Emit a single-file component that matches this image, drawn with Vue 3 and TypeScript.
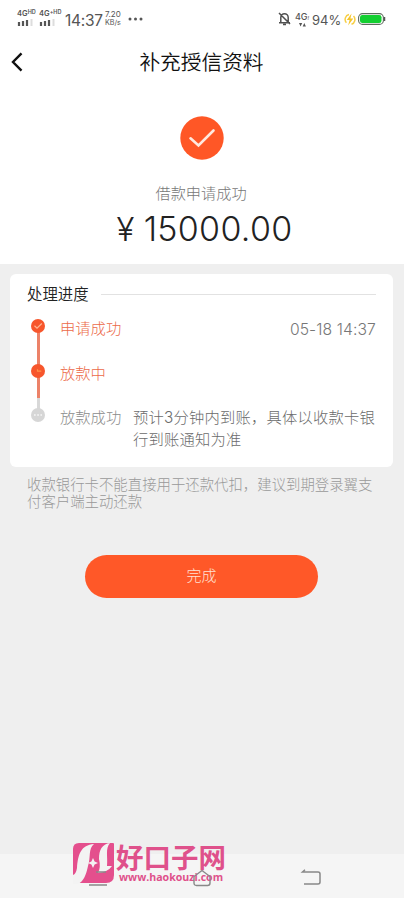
<script setup lang="ts">
interface Step {
  label: string
  state: 'done' | 'active' | 'pending'
  time?: string
  note?: string[]
}

const steps: Step[] = [
  { label: '申请成功', state: 'done', time: '05-18 14:37' },
  { label: '放款中', state: 'active' },
  { label: '放款成功', state: 'pending', note: ['预计3分钟内到账，具体以收款卡银', '行到账通知为准'] },
]
const tips: string[] = ['收款银行卡不能直接用于还款代扣，建议到期登录翼支', '付客户端主动还款']
const networks: string[] = ['HD', '+HD']
</script>

<template>
  <div class="screen">
    <header class="status">
      <div v-for="n in networks" :key="n" class="signal">
        <span class="net">4G<sup>{{ n }}</sup></span>
        <svg width="17" height="7" viewBox="0 0 17 7">
          <path d="M2 3v4M6 2v5M10 1v6" stroke="#555" stroke-width="2.2" />
          <path d="M14.500 0v7" stroke="#ddd" stroke-width="2" />
        </svg>
      </div>
      <span class="clock">14:37</span>
      <span class="speed"><span>7.20</span><span>KB/s</span></span>
      <svg class="more" width="15" height="4" viewBox="0 0 15 4" fill="#555">
        <circle cx="2" cy="2" r="1.500" /><circle cx="7.500" cy="2" r="1.500" /><circle cx="13" cy="2" r="1.500" />
      </svg>
      <svg class="bell" width="13" height="14" viewBox="0 0 13 14" fill="none" stroke="#505050" stroke-width="1.500">
        <path d="M2.800 10.300V5.500a3.700 3.700 0 0 1 7.400 0v4.800M1 10.700h11M5 12.600h3M1 1l11 11" />
      </svg>
      <span class="data">
        <span>4G<i>!</i></span>
        <svg width="7" height="4" viewBox="0 0 7 4" fill="#555"><path d="M0 0h3.200L1.600 3.500zM3.700 3.500h3.200L5.300 0z" /></svg>
      </span>
      <span class="percent">94%</span>
      <svg class="charge" width="12" height="13" viewBox="0 0 12 13" fill="none">
        <path d="M5 1.500a5 5 0 0 0-2.600 8.200M7.500 11.300a5 5 0 0 0 2-8.200" stroke="#f7cf45" stroke-width="1.500" />
        <path d="M7.600.5 2.800 7h2.800l-1.500 5.500L9.300 5.500H6.400z" fill="#f5c52b" />
      </svg>
      <svg class="battery" width="28" height="12" viewBox="0 0 28 12">
        <rect x=".6" y=".6" width="24.800" height="10.800" rx="4" fill="#fff" stroke="#5d6b5d" stroke-width="1.100" />
        <rect x="2" y="2" width="21.500" height="8" rx="2.300" fill="#13cf31" />
        <path d="M26.500 4v4" stroke="#555" stroke-width="1.500" />
      </svg>
    </header>

    <nav class="bar">
      <svg class="back" width="12" height="20" viewBox="0 0 12 20" fill="none" stroke="#111" stroke-width="2.400">
        <path d="M10.500 1.300 2 10l8.500 8.700" />
      </svg>
      <h1>补充授信资料</h1>
    </nav>

    <section class="result">
      <svg width="44" height="44" viewBox="0 0 44 44">
        <circle cx="22" cy="22" r="21.700" fill="#ff5726" />
        <path d="m10.500 22.300 8 7.200L33.500 14.500" fill="none" stroke="#ffe9df" stroke-width="2.600" stroke-linecap="round" />
      </svg>
      <p class="caption">借款申请成功</p>
      <p class="amount"><span class="yen">¥</span><span class="digits">15000.00</span></p>
    </section>

    <main>
      <section class="card">
        <div class="heading"><h2>处理进度</h2><hr /></div>
        <ol>
          <li v-for="s in steps" :key="s.label" :class="s.state">
            <svg class="dot" width="14" height="14" viewBox="0 0 14 14" fill="none">
              <circle cx="7" cy="7" r="7" :fill="s.state === 'pending' ? '#d6d6d6' : '#f7562c'" />
              <path v-if="s.state === 'done'" d="m3.500 6.800 2.500 2.400 4.800-4.700" stroke="#ffb592" stroke-width="1.200" />
              <path v-else-if="s.state === 'active'" d="M6.500 5.200v2h3.800" stroke="#ff9348" stroke-width="1.200" />
              <path v-else d="M3 7h1.700M6.200 7h1.700M9.400 7H11" stroke="#f6f6f6" stroke-width="1.500" />
            </svg>
            <span class="label">{{ s.label }}</span>
            <time v-if="s.time">{{ s.time }}</time>
            <p v-if="s.note" class="note"><span v-for="line in s.note" :key="line">{{ line }}</span></p>
          </li>
        </ol>
      </section>
      <p class="tips"><span v-for="t in tips" :key="t">{{ t }}</span></p>
      <button type="button">完成</button>
    </main>

    <footer>
      <svg class="menu-key" width="20" height="18" viewBox="0 0 20 18" fill="none" stroke="#888" stroke-width="1.300">
        <path d="M8 3h10M1 16h18" />
      </svg>
      <svg class="home-key" width="18" height="18" viewBox="0 0 18 18" fill="none" stroke="#888" stroke-width="1.400">
        <path d="M1 7.500 9 1.500l8 6V14q0 2.500-2.500 2.500h-11Q1 16.500 1 14z" />
      </svg>
      <svg class="back-key" width="21" height="17" viewBox="0 0 21 17" fill="none" stroke="#888" stroke-width="1.500">
        <path d="M5 .8 2.500 3H18q2 0 2 2v8q0 2-2 2H4" />
      </svg>
      <div class="watermark">
        <svg width="42" height="42" viewBox="0 0 42 42">
          <path fill="#e44f8d" d="M6 1h34q1 0 1 1v31q0 8-8 8H6L0 33V7q0-6 6-6z" />
          <path fill="#f3f3f3" d="M0 33q3-1 4-7C5 12 8 3 21 2c-6 5-3 13-6 22-2 9-4 15-10 18H0z" />
          <path fill="#f3f3f3" d="M26 17c0-9 3-15 11-16-5 6-2 13-3 23l5 0q-4 6-14 7 3-6 1-14z" />
          <path fill="#f3f3f3" d="m20 16 1.600 3.600 3.400 1.400-3.400 1.400L20 26l-1.600-3.600L15 21l3.400-1.400z" />
        </svg>
        <div class="brand"><strong>好口子网</strong><span>www.haokouzi.com</span></div>
      </div>
    </footer>
  </div>
</template>

<style>
body { background: #efefef; }
</style>

<style scoped>
* { box-sizing: border-box; margin: 0; padding: 0; }
.screen { width: 404px; height: 898px; overflow: hidden; display: flex; flex-direction: column; background: #efefef; font-family: Inter, "Noto Sans CJK SC", sans-serif; font-weight: 300; color: #222; }
svg { display: block; flex: none; }
.status { height: 38px; flex: none; background: #fff; display: flex; align-items: center; padding: 0 18px 0 17px; color: #555; }
.signal { width: 22px; height: 16px; display: flex; flex-direction: column; justify-content: space-between; margin-top: -3px; }
.net { font-size: 7.500px; line-height: 8px; font-weight: 600; white-space: nowrap; height: 8px; }
.net sup { font-size: 5.500px; line-height: 0; vertical-align: 2px; }
.clock { font-size: 15.500px; font-weight: 400; margin-left: 4px; letter-spacing: -.3px; width: 37px; margin-top: 2px; }
.speed { display: flex; flex-direction: column; width: 23px; margin-left: 3px; font-size: 7.200px; line-height: 8px; font-weight: 400; }
.speed span:first-child { font-size: 8px; line-height: 9px; margin-top: -2px; }
.bell { margin-left: auto; }
.data { width: 14px; margin-left: 4px; font-size: 9px; line-height: 9px; font-weight: 500; display: flex; flex-direction: column; align-items: center; }
.data i { font-size: 5px; }
.percent { font-size: 13px; font-weight: 400; margin-left: 3px; width: 30px; margin-top: 1px; }
.charge { margin-left: 2px; }
.battery { margin-left: 2px; }
.bar { height: 48px; flex: none; background: #fff; display: flex; align-items: center; padding: 0 12px 0 11px; }
.bar h1 { flex: 1; text-align: center; font-size: 20.700px; line-height: 30px; font-weight: 350; padding: 2px 12px 0 0; color: #111; }
.result { height: 178px; flex: none; background: #fff; display: flex; flex-direction: column; align-items: center; padding-top: 30px; }
.caption { margin: 23px 2px 0 0; font-size: 15.200px; line-height: 22px; color: #777; }
.amount { display: flex; width: 175px; justify-content: space-between; align-items: baseline; font-size: 34px; line-height: 40px; margin-top: 4px; margin-left: 4px; }
.digits { letter-spacing: .3px; margin-right: -1px; }
.yen { font-size: 33px; }
main { flex: 1; display: flex; flex-direction: column; padding: 10px 11px 0 10px; }
.card { height: 193px; background: #fff; border-radius: 6px; padding: 9px 17px 0; }
.heading { display: flex; align-items: center; gap: 12px; height: 22px; }
.heading h2 { font-size: 15.400px; line-height: 22px; font-weight: 350; color: #222; padding-top: 1px; }
.heading hr { flex: 1; border: 0; border-top: 1px solid #e2e2e2; }
ol { list-style: none; padding: 14px 0 0 4px; }
li { display: flex; align-items: flex-start; height: 44.500px; position: relative; font-size: 15.300px; line-height: 22px; color: #8c8c8c; }
li:not(:last-child)::before { content: ""; position: absolute; left: 5.500px; top: 10px; width: 3px; height: 44px; background: #ec8268; }
li.active::before { background: linear-gradient(#ec8268 0 24px, #d8d8d8 24px) !important; }
.dot { position: relative; z-index: 1; }
.label, time, .note { margin-top: -1px; }
.done time { margin-top: 0; }
.label { margin-left: 15px; width: 73px; white-space: nowrap; }
.done .label, .active .label { color: #ec6a49; }
time { margin-left: auto; font-size: 15.700px; color: #777; letter-spacing: .1px; }
.note { color: #6b6b6b; white-space: nowrap; letter-spacing: .2px; }
.note span, .tips span { display: block; }
.tips { margin: 10px 0 0 17px; font-size: 14.400px; line-height: 16.500px; color: #999; white-space: nowrap; }
button { width: 233px; height: 43px; margin: 45px 0 0 75px; border: 0; border-radius: 22px; background: #ff5828; color: #ffe2d5; font: inherit; font-size: 15px; padding-bottom: 5px; }
footer { height: 44px; flex: none; position: relative; background: #f5f5f5; display: flex; align-items: flex-start; padding: 15px 83px 0 88px; }
.menu-key, .home-key { position: relative; z-index: 1; }
.home-key { margin-left: 85px; }
.back-key { margin-left: auto; }
.watermark { position: absolute; left: 73px; top: -12px; display: flex; gap: 1px; color: #df518b; }
.brand { display: flex; flex-direction: column; }
.brand strong { font-size: 27.500px; line-height: 32px; font-weight: 700; height: 30px; white-space: nowrap; }
.brand span { font: 700 10.600px/11px "Open Sans", sans-serif; margin: 0 0 0 3px; }
</style>
